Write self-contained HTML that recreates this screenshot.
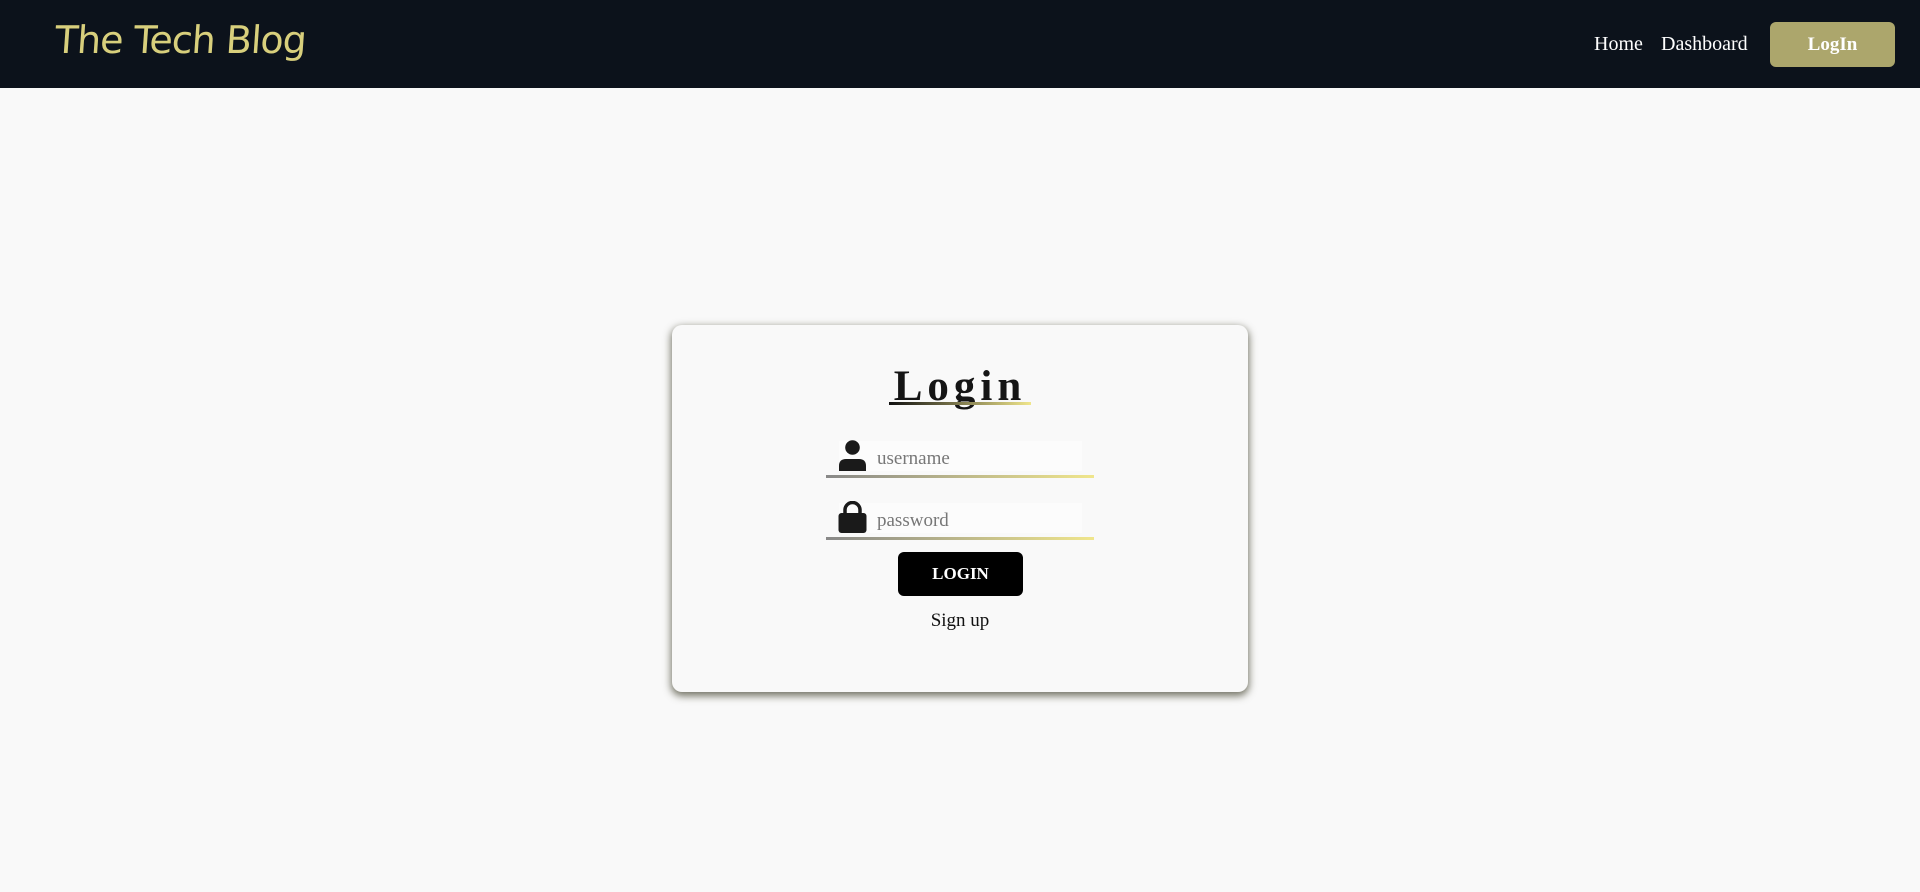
<!DOCTYPE html>
<html><head><meta charset="utf-8"><style>
*{margin:0;padding:0;box-sizing:border-box}
body{width:1920px;height:892px;background:#f9f9f9;font-family:"Liberation Serif",serif;position:relative;overflow:hidden}
header{position:absolute;left:0;top:0;width:1920px;height:88px;background:#0c121b}
.logo{position:absolute;left:55px;top:18px;font-family:"Comic Sans MS","DejaVu Sans",cursive;font-size:38px;color:#d8cf7c;font-weight:normal;letter-spacing:-1px;transform:skewX(-4deg)}
.nav{position:absolute;top:33px;font-size:20px;color:#fff}
.btn{position:absolute;left:1770px;top:22px;width:125px;height:45px;background:#aca66c;border-radius:6px;color:#fff;font-weight:bold;font-size:19px;text-align:center;line-height:45px}
.card{position:absolute;left:672px;top:325px;width:576px;height:367px;background:#f9f9f9;border-radius:10px;box-shadow:0 3px 8px 1px rgba(60,60,40,.7)}
.title{position:absolute;left:0;width:100%;top:362px;text-align:center;font-size:43px;font-weight:bold;letter-spacing:5px;color:#151515}
.ul{position:absolute;left:889px;top:402px;width:142px;height:3px;background:linear-gradient(90deg,#111,#f0e68c)}
.inbg{position:absolute;left:839px;width:243px;height:30px;background:#fcfcfc}
.line{position:absolute;left:826px;width:268px;height:3px;background:linear-gradient(90deg,#888,#f0e68c)}
.ph{position:absolute;left:877px;font-size:19px;color:#777}
.lb{position:absolute;left:898px;top:552px;width:125px;height:44px;background:#000;border-radius:6px;color:#fff;font-weight:bold;font-size:17px;text-align:center;line-height:44px}
.su{position:absolute;left:0;width:1920px;text-align:center;top:610px;font-size:19px;color:#111}
</style></head><body>
<header>
<div class="logo">The Tech Blog</div>
<div class="nav" style="left:1594px">Home</div>
<div class="nav" style="left:1661px">Dashboard</div>
<div class="btn">LogIn</div>
</header>
<div class="card"></div>
<div class="title">Login</div>
<div class="ul"></div>
<div class="inbg" style="top:441px"></div>
<div class="inbg" style="top:503px"></div>
<svg style="position:absolute;left:838px;top:440px" width="29" height="31" viewBox="0 0 29 31"><circle cx="14.5" cy="7.5" r="7.3" fill="#1a1a1a"/><path d="M1 31 V26 Q1 19 8 19 H21 Q28 19 28 26 V31 Z" fill="#1a1a1a"/></svg>
<svg style="position:absolute;left:838px;top:501px" width="29" height="32" viewBox="0 0 29 32"><path d="M7 13 V9 A7.5 7.5 0 0 1 22 9 V13" fill="none" stroke="#1a1a1a" stroke-width="3.5"/><rect x="0.5" y="12" width="28" height="20" rx="3" fill="#1a1a1a"/></svg>
<div class="ph" style="top:448px">username</div>
<div class="ph" style="top:510px">password</div>
<div class="line" style="top:475px"></div>
<div class="line" style="top:537px"></div>
<div class="lb">LOGIN</div>
<div class="su">Sign up</div>
</body></html>
